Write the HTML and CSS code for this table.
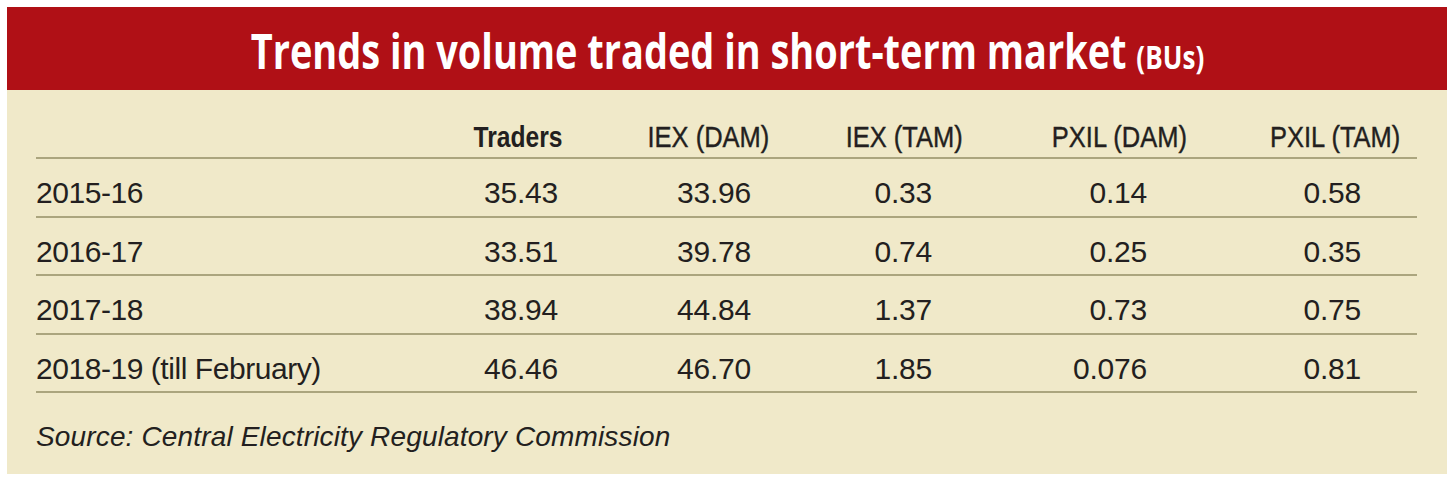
FILE: index.html
```html
<!DOCTYPE html>
<html lang="en">
<head>
<meta charset="utf-8">
<title>Trends in volume traded in short-term market</title>
<link rel="stylesheet" href="styles.css">
</head>
<body>
<div class="panel">
  <h1 class="title"><span class="title-text">Trends in volume traded in short-term market <span class="unit">(BUs)</span></span></h1>
  <div class="table">
    <div class="row head">
      <span></span>
      <span class="h strong"><span class="hx">Traders</span></span>
      <span class="h"><span class="hx">IEX (DAM)</span></span>
      <span class="h"><span class="hx">IEX (TAM)</span></span>
      <span class="h"><span class="hx">PXIL (DAM)</span></span>
      <span class="h"><span class="hx">PXIL (TAM)</span></span>
    </div>
    <div class="row">
      <span class="label">2015-16</span>
      <span class="num">35.43</span>
      <span class="num">33.96</span>
      <span class="num">0.33</span>
      <span class="num">0.14</span>
      <span class="num">0.58</span>
    </div>
    <div class="row">
      <span class="label">2016-17</span>
      <span class="num">33.51</span>
      <span class="num">39.78</span>
      <span class="num">0.74</span>
      <span class="num">0.25</span>
      <span class="num">0.35</span>
    </div>
    <div class="row">
      <span class="label">2017-18</span>
      <span class="num">38.94</span>
      <span class="num">44.84</span>
      <span class="num">1.37</span>
      <span class="num">0.73</span>
      <span class="num">0.75</span>
    </div>
    <div class="row">
      <span class="label">2018-19 (till February)</span>
      <span class="num">46.46</span>
      <span class="num">46.70</span>
      <span class="num">1.85</span>
      <span class="num">0.076</span>
      <span class="num">0.81</span>
    </div>
  </div>
  <p class="source">Source: Central Electricity Regulatory Commission</p>
</div>
</body>
</html>
```
FILE: styles.css
```css
html, body {
  margin: 0;
  padding: 0;
  background: #ffffff;
}
body {
  padding: 7px;
}
.panel {
  width: 1440px;
  background: #f0e9c9;
  color: #231f20;
  font-family: "Liberation Sans", Arial, sans-serif;
}
.title {
  margin: 0;
  height: 83px;
  box-sizing: border-box;
  padding-top: 5px;
  line-height: 78px;
  background: #b01016;
  color: #ffffff;
  text-align: center;
  font-family: "Open Sans", "Liberation Sans", sans-serif;
  font-weight: 700;
  font-size: 48px;
  white-space: nowrap;
}
.title-text {
  display: inline-block;
  transform: scaleX(0.79);
  transform-origin: center;
}
.unit {
  font-size: 33px;
}
.table {
  padding: 0 30px 0 29px;
}
.row {
  display: grid;
  grid-template-columns: 404px 122px 207px 194px 224px 213px 17px;
  align-items: center;
  height: 58.5px;
  box-sizing: border-box;
  padding-top: 12px;
  border-bottom: 2px solid #aba57e;
  font-size: 30px;
  line-height: 34px;
  letter-spacing: -0.2px;
}
.row.head {
  height: 69px;
  padding-top: 26px;
}
.h {
  text-align: right;
  white-space: nowrap;
  letter-spacing: 0;
}
.hx {
  display: inline-block;
  transform: scaleX(0.85);
  transform-origin: right center;
  -webkit-text-stroke: 0.4px #231f20;
}
.h.strong .hx {
  font-weight: 700;
  transform: scaleX(0.82);
  -webkit-text-stroke: 0;
}
.label {
  white-space: nowrap;
  letter-spacing: -0.45px;
}
.num {
  text-align: right;
}
.num:nth-child(2) { padding-right: 4px; }
.num:nth-child(3) { padding-right: 18px; }
.num:nth-child(4) { padding-right: 31px; }
.num:nth-child(5) { padding-right: 40px; }
.num:nth-child(6) { padding-right: 39px; }
.source {
  margin: 0;
  padding: 29px 29px 22px;
  font-size: 28px;
  line-height: 30px;
  font-style: italic;
  letter-spacing: 0.15px;
}
```
